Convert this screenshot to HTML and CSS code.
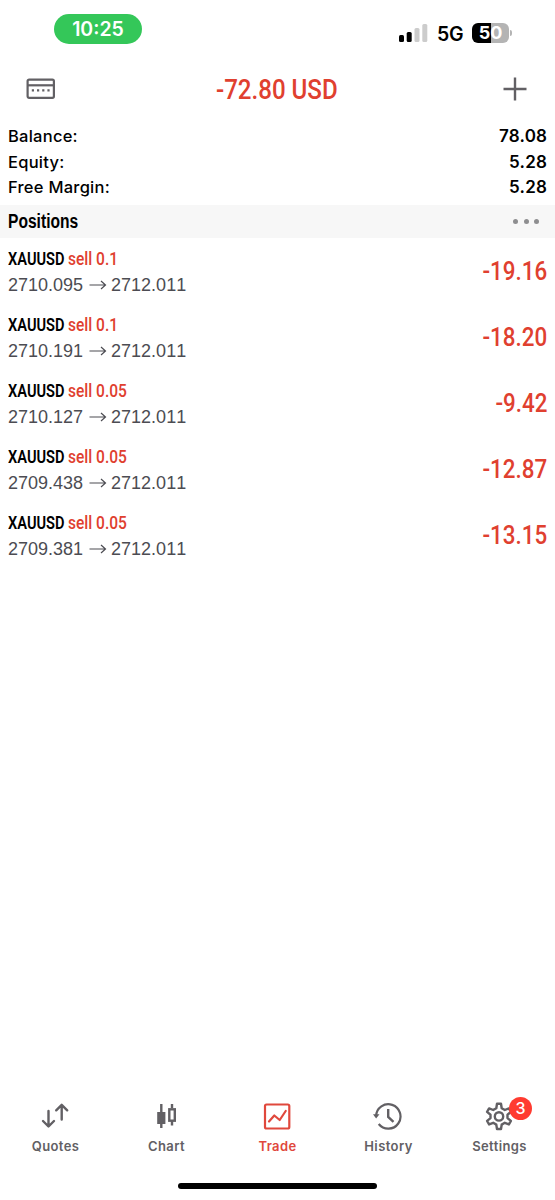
FILE: index.html
```html
<!DOCTYPE html>
<html lang="en">
<head>
<meta charset="utf-8">
<title>Trade</title>
<link rel="stylesheet" href="styles.css">
</head>
<body>
<div class="app">
  <div class="status">
    <div class="clock">10:25</div>
    <div class="status-right">
      <svg class="signal" width="30" height="20" viewBox="0 0 30 20"><rect x="0" y="12" width="5" height="7" rx="1.5"/><rect x="7.7" y="9" width="5" height="10" rx="1.5"/><rect x="15.5" y="5" width="5" height="14" rx="1.5" fill="#ccc"/><rect x="23.3" y="1" width="5" height="18" rx="1.5" fill="#ccc"/></svg>
      <span class="network">5G</span>
      <span class="battery">50</span>
      <span class="battery-tip"></span>
    </div>
  </div>
  <header class="topbar">
    <svg width="30" height="22" viewBox="0 0 30 22" fill="none" stroke="#626064" stroke-width="2.2"><rect x="1.6" y="1.6" width="26.3" height="18.2" rx="1.5"/><path d="M1.6 7.3H28"/><path d="M5.8 12.4H25" stroke-dasharray="2.2 3"/></svg>
    <h1 class="total"><span class="cond">-72.80 USD</span></h1>
    <svg width="24" height="24" viewBox="0 0 24 24" stroke="#626064" stroke-width="2.4"><path d="M0.5 12H23.5M12 0.5V23.5"/></svg>
  </header>
  <dl class="account">
    <div><dt>Balance:</dt><dd>78.08</dd></div>
    <div><dt>Equity:</dt><dd>5.28</dd></div>
    <div><dt>Free Margin:</dt><dd>5.28</dd></div>
  </dl>
  <div class="section"><h2 class="cond">Positions</h2><div class="dots"><i></i><i></i><i></i></div></div>
  <ul class="positions">
    <li><div><div class="deal"><b>XAUUSD</b> <span>sell 0.1</span></div><div class="price">2710.095<svg class="arrow" viewBox="0 0 18 12"><path d="M0.5 6H16.5M12 2L16.5 6L12 10"/></svg>2712.011</div></div><div class="profit">-19.16</div></li>
    <li><div><div class="deal"><b>XAUUSD</b> <span>sell 0.1</span></div><div class="price">2710.191<svg class="arrow" viewBox="0 0 18 12"><path d="M0.5 6H16.5M12 2L16.5 6L12 10"/></svg>2712.011</div></div><div class="profit">-18.20</div></li>
    <li><div><div class="deal"><b>XAUUSD</b> <span>sell 0.05</span></div><div class="price">2710.127<svg class="arrow" viewBox="0 0 18 12"><path d="M0.5 6H16.5M12 2L16.5 6L12 10"/></svg>2712.011</div></div><div class="profit">-9.42</div></li>
    <li><div><div class="deal"><b>XAUUSD</b> <span>sell 0.05</span></div><div class="price">2709.438<svg class="arrow" viewBox="0 0 18 12"><path d="M0.5 6H16.5M12 2L16.5 6L12 10"/></svg>2712.011</div></div><div class="profit">-12.87</div></li>
    <li><div><div class="deal"><b>XAUUSD</b> <span>sell 0.05</span></div><div class="price">2709.381<svg class="arrow" viewBox="0 0 18 12"><path d="M0.5 6H16.5M12 2L16.5 6L12 10"/></svg>2712.011</div></div><div class="profit">-13.15</div></li>
  </ul>
  <nav class="tabs">
    <a><svg viewBox="0 0 30 30" stroke-width="2.4" stroke-linecap="round" stroke-linejoin="round"><path d="M8.5 10V25M3 20L8.5 25.5L14 20M21.7 18.5V4M16.2 9.3L21.7 3.8L27.2 9.3"/></svg>Quotes</a>
    <a><svg viewBox="0 0 30 30" stroke-width="2.4"><path d="M10.3 3V27M21 3V7M21 20V24.5"/><rect class="solid" x="6.2" y="11" width="8.2" height="12" stroke="none"/><rect x="18.3" y="8.3" width="5.5" height="11.4"/></svg>Chart</a>
    <a class="active"><svg viewBox="0 0 30 30" stroke-width="2.2" stroke-linecap="round" stroke-linejoin="round"><rect x="3" y="3.5" width="24.3" height="24" rx="1.5"/><path d="M7 20.5L12.3 14.5L17.7 19L23.7 10"/></svg>Trade</a>
    <a><svg viewBox="1.3 0 30 30" stroke-width="2.2"><path d="M4.4 15A12.2 12.2 0 1 1 7 23"/><path d="M16.5 8V16L21.8 20.8" stroke-width="2.4"/><path class="solid" d="M1.3 13.2H7.8L4.4 17.4Z" stroke="none"/></svg>History</a>
    <a><svg viewBox="0 0 30 30" stroke-width="2.4" stroke-linejoin="round"><path d="M13 2.8H17L17.7 7.2L20.8 9L24.9 7.4L26.9 10.9L23.5 13.7V17.1L26.9 19.9L24.9 23.4L20.8 21.8L17.7 23.6L17 28H13L12.3 23.6L9.2 21.8L5.1 23.4L3.1 19.9L6.5 17.1V13.7L3.1 10.9L5.1 7.4L9.2 9L12.3 7.2Z"/><circle cx="15" cy="15.4" r="4.2"/></svg>Settings<span class="badge">3</span></a>
  </nav>
  <div class="home"></div>
</div>
</body>
</html>
```
FILE: styles.css
```css
* { box-sizing: border-box; }
body, h1, h2, dl, dd, ul { margin: 0; padding: 0; }
body { background: #fff; color: #000; font-family: Inter, sans-serif; }
.app { width: 555px; height: 1200px; display: flex; flex-direction: column; overflow: hidden; }
.status { height: 62px; padding: 14px 43px 0 54px; display: flex; justify-content: space-between; align-items: flex-start; }
.clock { width: 88px; height: 30px; border-radius: 15px; background: #34c759; color: #fff; font-weight: 600; font-size: 19.5px; line-height: 31px; text-align: center; }
.status-right { display: flex; align-items: center; height: 20px; margin-top: 9px; }
.network { width: 26px; margin: 2px 9px 0 8px; font-size: 19.5px; font-weight: 600; letter-spacing: -0.3px; }
.battery { width: 37px; height: 20px; border-radius: 6px; background: linear-gradient(90deg, #000 51%, #b4b4b4 51%); color: #fff; font-weight: 700; font-size: 18px; line-height: 20px; text-align: center; }
.battery-tip { width: 2px; height: 6px; margin-left: 1px; border-radius: 0 3px 3px 0; background: #b4b4b4; }
.topbar { height: 61px; padding: 0 28px 7px 26px; display: flex; align-items: center; justify-content: space-between; }
.total { width: 125px; margin: 1px 2px 0 0; color: #e0402f; font: 500 28px/34px Roboto, sans-serif; white-space: nowrap; }
.cond { display: block; transform-origin: 0 50%; }
.total .cond { transform: scaleX(0.86); }
.account { padding: 1px 8px 0; height: 82px; font-size: 16.5px; line-height: 25.5px; font-weight: 500; letter-spacing: 0.25px; }
.account div { display: flex; justify-content: space-between; }
.account dd { font-weight: 600; font-size: 17px; margin-right: -0.25px; }
.section { height: 33px; padding: 0 16px 0 8px; background: #f7f7f7; display: flex; align-items: center; justify-content: space-between; }
.section h2 { font: 700 19.5px/35px "Liberation Sans", sans-serif; transform: scaleX(0.8); }
.dots { display: flex; gap: 5.5px; }
.dots i { width: 5px; height: 5px; border-radius: 50%; background: #8e8e90; }
.positions { list-style: none; flex: 1; }
.positions li { height: 66px; padding: 1px 8px 0; display: flex; justify-content: space-between; align-items: center; }
.deal { display: flex; height: 27px; font: 500 18.5px/28px Roboto, sans-serif; white-space: nowrap; }
.deal b { width: 60px; font-weight: 600; transform: scaleX(0.79); transform-origin: 0 50%; }
.deal span { color: #e0402f; transform: scaleX(0.84); transform-origin: 0 50%; }
.price { display: flex; align-items: center; height: 26px; font: 18px/26px "Liberation Sans", sans-serif; font-kerning: none; color: #4c4c52; }
.arrow { width: 18px; height: 12px; margin: 0 4px 0 6px; fill: none; stroke: #4c4c52; stroke-width: 1.2; }
.profit { margin-bottom: 2px; color: #e0402f; font: 500 26px/32px Roboto, sans-serif; transform: scaleX(0.86); transform-origin: 100% 50%; }
.tabs { height: 84px; padding-top: 2px; display: flex; }
.tabs a { position: relative; flex: 1; display: flex; flex-direction: column; align-items: center; color: #626064; font-size: 13px; line-height: 16px; font-weight: 600; letter-spacing: 0.4px; }
.tabs svg { width: 30px; height: 30px; margin: 0 0 7px -1.5px; fill: none; stroke: currentColor; }
.tabs .solid { fill: currentColor; }
.tabs .active { color: #e0483c; }
.badge { position: absolute; left: 65px; top: -4px; width: 23px; height: 23px; border-radius: 50%; background: #ff3b30; color: #fff; font-size: 16px; line-height: 23px; font-weight: 500; letter-spacing: 0; text-align: center; }
.home { width: 199px; height: 6px; margin: 0 auto 11px; border-radius: 3px; background: #000; }
```
